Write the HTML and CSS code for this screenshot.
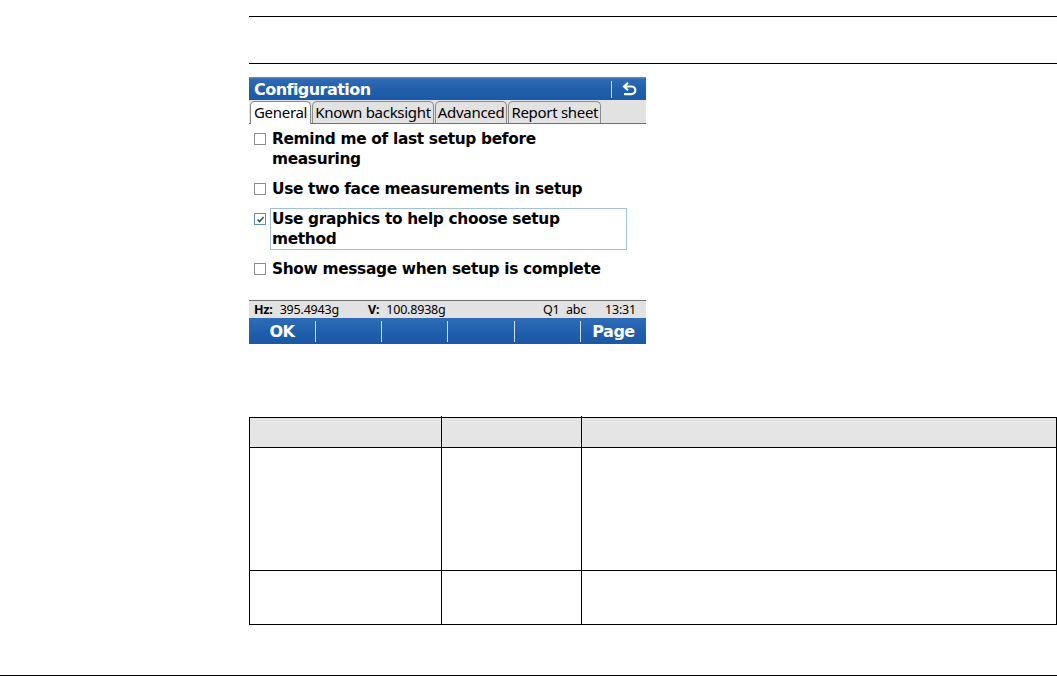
FILE: index.html
```html
<!DOCTYPE html>
<html lang="en">
<head>
<meta charset="utf-8">
<title>Configuration</title>
<link rel="stylesheet" href="styles.css">
</head>
<body>
<div class="page">
  <main class="content">
    <div class="heading-band"></div>
    <section class="device">
      <header class="titlebar">
        <span class="title">Configuration</span>
        <span class="back">
          <svg width="15" height="14" viewBox="0 0 15 14" fill="none" stroke="#fff" stroke-width="2.2">
            <path d="M2.5 4.5H9.5a3.7 3.7 0 0 1 0 7.6H2"/>
            <path d="M6 0.8L2 4.5L6 8.2"/>
          </svg>
        </span>
      </header>
      <nav class="tabs">
        <span class="tab tab-active">General</span>
        <span class="tab">Known backsight</span>
        <span class="tab">Advanced</span>
        <span class="tab">Report sheet</span>
      </nav>
      <div class="options">
        <div class="option"><span class="check"></span><span class="label">Remind me of last setup before measuring</span></div>
        <div class="option"><span class="check"></span><span class="label">Use two face measurements in setup</span></div>
        <div class="option"><span class="check check-on"><svg width="9" height="9" viewBox="0 0 9 9" fill="none" stroke="#1d4f94" stroke-width="1.5"><path d="M1.5 4.5L3.6 6.6L7.6 2"/></svg></span><span class="label label-focus">Use graphics to help choose setup method</span></div>
        <div class="option"><span class="check"></span><span class="label">Show message when setup is complete</span></div>
      </div>
      <div class="status">
        <span class="st-hz"><b class="st-key">Hz:</b>395.4943g</span>
        <span class="st-v"><b class="st-key">V:</b>100.8938g</span>
        <span class="st-q">Q1</span>
        <span class="st-abc">abc</span>
        <span class="st-time">13:31</span>
      </div>
      <footer class="softkeys">
        <span class="key">OK</span>
        <span class="key"></span>
        <span class="key"></span>
        <span class="key"></span>
        <span class="key"></span>
        <span class="key">Page</span>
      </footer>
    </section>
    <table class="grid">
      <thead>
        <tr class="row-head"><th class="c1"></th><th class="c2"></th><th class="c3"></th></tr>
      </thead>
      <tbody>
        <tr class="row-a"><td></td><td></td><td></td></tr>
        <tr class="row-b"><td></td><td></td><td></td></tr>
      </tbody>
    </table>
  </main>
  <div class="foot-rule"></div>
</div>
</body>
</html>
```
FILE: styles.css
```css
* { box-sizing: border-box; }
html, body { margin: 0; padding: 0; background: #fff; }
.page {
  width: 1057px;
  height: 676px;
  display: flex;
  flex-direction: column;
  overflow: hidden;
}
.content {
  flex: 1;
  padding: 16px 0 0 249px;
}
.heading-band {
  height: 48px;
  border-top: 1px solid #000;
  border-bottom: 1px solid #000;
}
.foot-rule { height: 1px; background: #000; }

.device {
  width: 397px;
  height: 267px;
  margin-top: 13px;
  display: flex;
  flex-direction: column;
  font-family: "DejaVu Sans", sans-serif;
  color: #000;
  background: #fff;
}
.titlebar {
  height: 23px;
  flex: none;
  display: flex;
  align-items: center;
  justify-content: space-between;
  padding: 1px 9px 0 5px;
  background: linear-gradient(#6f97c6 0, #2f6ab4 2px, #1f5eab 60%, #1b5aa8 100%);
  color: #fff;
}
.title { font-size: 16px; font-weight: 700; letter-spacing: -0.55px; }
.back {
  display: flex;
  align-items: center;
  height: 17px;
  padding-left: 10px;
  border-left: 1px solid #c6d6ea;
}
.tabs {
  height: 24px;
  flex: none;
  display: flex;
  align-items: flex-end;
  gap: 1px;
  padding-left: 1px;
  background: #e2e2e2;
  border-bottom: 1px solid #6e6e6e;
}
.tab {
  height: 22px;
  padding: 0 2px 2px;
  display: flex;
  align-items: center;
  font-family: "Noto Sans", sans-serif;
  font-size: 15px;
  letter-spacing: -0.3px;
  white-space: nowrap;
  border: 1px solid #8a8a8a;
  border-bottom: 0;
  border-radius: 5px 5px 0 0;
}
.tab-active {
  background: #fff;
  height: 23px;
  margin-bottom: -1px;
  padding: 0 3px 3px;
}

.options {
  flex: 1;
  display: flex;
  flex-direction: column;
  gap: 8px;
  padding: 4px 0 0 5px;
}
.option { display: flex; align-items: flex-start; }
.check {
  flex: none;
  width: 12px;
  height: 12px;
  margin: 5px 4px 0 0;
  display: flex;
  align-items: center;
  justify-content: center;
  border: 1px solid #8d8d8d;
  background: #fff;
}
.check-on { border-color: #5f8fc0; }
.label {
  width: 357px;
  padding: 0 1px;
  border: 1px solid transparent;
  font-size: 15.4px;
  font-weight: 700;
  line-height: 20px;
  letter-spacing: -0.34px;
}
.label-focus { border-color: #a3c0dc; }

.status {
  height: 18px;
  flex: none;
  display: flex;
  align-items: center;
  padding: 0 0 0 5px;
  background: #e2e2e2;
  border-top: 1px solid #6e6e6e;
  font-family: "Noto Sans", sans-serif;
  font-size: 12.5px;
  letter-spacing: -0.2px;
  white-space: nowrap;
}
.st-key { margin-right: 7px; }
.st-hz { width: 114px; }
.st-v { width: 175px; }
.st-q { width: 23px; }
.st-abc { width: 39px; }
.softkeys {
  height: 26px;
  flex: none;
  display: grid;
  grid-template-columns: 67px 66px 66px 67px 66px 65px;
  align-items: center;
  background: linear-gradient(#2f6cb6 0, #1f5fae 55%, #1b58a6 100%);
  color: #fff;
  font-family: "DejaVu Sans", sans-serif;
  font-size: 16px;
  font-weight: 700;
  letter-spacing: -0.5px;
}
.key {
  height: 21px;
  display: flex;
  align-items: center;
  justify-content: center;
  border-right: 1px solid #cfdcec;
}
.key:last-child { border-right: 0; }

.grid {
  width: 808px;
  margin-top: 73px;
  border-collapse: collapse;
  table-layout: fixed;
}
.grid th, .grid td { border: 1px solid #000; padding: 0; }
.grid th { position: relative; }
.c2::before, .c3::before {
  content: "";
  position: absolute;
  top: -2px;
  left: -1px;
  width: 1px;
  height: 2px;
  background: #000;
}
.c1 { width: 192px; }
.c2 { width: 140px; }
.row-head { height: 30px; background: #e5e5e5; }
.row-a { height: 123px; }
.row-b { height: 54px; }
```
